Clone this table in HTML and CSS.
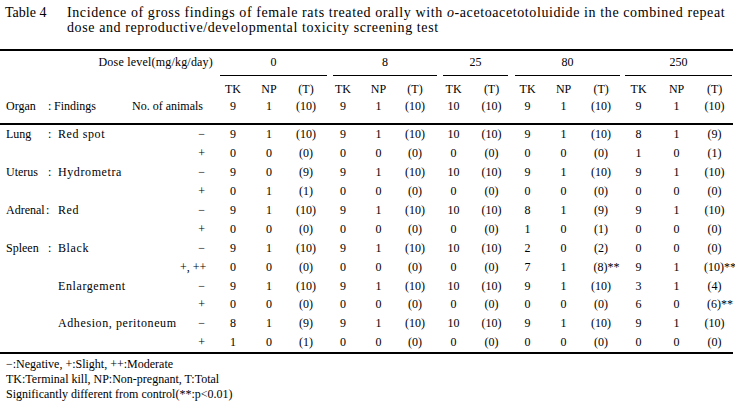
FILE: index.html
```html
<!DOCTYPE html>
<html>
<head>
<meta charset="utf-8">
<link rel="stylesheet" href="styles.css">
</head>
<body>
<div class="page">
  <div class="caption">
    <div class="label">Table 4</div>
    <div class="title"><span class="tl">Incidence of gross findings of female rats treated orally with <i>o</i>-acetoacetotoluidide in the combined repeat</span><span class="tl">dose and reproductive/developmental toxicity screening test</span></div>
  </div>
  <table class="data">
    <colgroup>
      <col class="c-organ"><col class="c-colon"><col class="c-find"><col class="c-sign">
      <col class="w36"><col class="w36"><col class="w38">
      <col class="w36"><col class="w35"><col class="w38">
      <col class="w39"><col class="w37">
      <col class="w35"><col class="w37"><col class="w38">
      <col class="w37"><col class="w39"><col class="w37">
    </colgroup>
    <thead>
      <tr class="h-dose">
        <th colspan="4" class="dl">Dose level(mg/kg/day)</th>
        <th colspan="3" class="grp g0"><span>0</span></th>
        <th colspan="3" class="grp g8"><span>8</span></th>
        <th colspan="2" class="grp g25"><span>25</span></th>
        <th colspan="3" class="grp g80"><span>80</span></th>
        <th colspan="3" class="grp g250"><span>250</span></th>
      </tr>
      <tr class="h-sub">
        <th colspan="4"></th>
        <th>TK</th><th>NP</th><th>(T)</th>
        <th>TK</th><th>NP</th><th>(T)</th>
        <th>TK</th><th>(T)</th>
        <th>TK</th><th>NP</th><th>(T)</th>
        <th>TK</th><th>NP</th><th>(T)</th>
      </tr>
      <tr class="h-n">
        <th class="organ">Organ</th><th class="colon">:</th>
        <th colspan="2" class="find-n"><div class="fn"><span>Findings</span><span>No. of animals</span></div></th>
        <th>9</th><th>1</th><th>(10)</th>
        <th>9</th><th>1</th><th>(10)</th>
        <th>10</th><th>(10)</th>
        <th>9</th><th>1</th><th>(10)</th>
        <th>9</th><th>1</th><th>(10)</th>
      </tr>
    </thead>
    <tbody>
      <tr><td class="organ">Lung</td><td class="colon">:</td><td class="find">Red spot</td><td class="sign">&minus;</td>
        <td>9</td><td>1</td><td>(10)</td><td>9</td><td>1</td><td>(10)</td><td>10</td><td>(10)</td><td>9</td><td>1</td><td>(10)</td><td>8</td><td>1</td><td>(9)</td></tr>
      <tr><td class="organ"></td><td class="colon"></td><td class="find"></td><td class="sign">+</td>
        <td>0</td><td>0</td><td>(0)</td><td>0</td><td>0</td><td>(0)</td><td>0</td><td>(0)</td><td>0</td><td>0</td><td>(0)</td><td>1</td><td>0</td><td>(1)</td></tr>
      <tr><td class="organ">Uterus</td><td class="colon">:</td><td class="find">Hydrometra</td><td class="sign">&minus;</td>
        <td>9</td><td>0</td><td>(9)</td><td>9</td><td>1</td><td>(10)</td><td>10</td><td>(10)</td><td>9</td><td>1</td><td>(10)</td><td>9</td><td>1</td><td>(10)</td></tr>
      <tr><td class="organ"></td><td class="colon"></td><td class="find"></td><td class="sign">+</td>
        <td>0</td><td>1</td><td>(1)</td><td>0</td><td>0</td><td>(0)</td><td>0</td><td>(0)</td><td>0</td><td>0</td><td>(0)</td><td>0</td><td>0</td><td>(0)</td></tr>
      <tr><td class="organ">Adrenal</td><td class="colon tight">:</td><td class="find">Red</td><td class="sign">&minus;</td>
        <td>9</td><td>1</td><td>(10)</td><td>9</td><td>1</td><td>(10)</td><td>10</td><td>(10)</td><td>8</td><td>1</td><td>(9)</td><td>9</td><td>1</td><td>(10)</td></tr>
      <tr><td class="organ"></td><td class="colon"></td><td class="find"></td><td class="sign">+</td>
        <td>0</td><td>0</td><td>(0)</td><td>0</td><td>0</td><td>(0)</td><td>0</td><td>(0)</td><td>1</td><td>0</td><td>(1)</td><td>0</td><td>0</td><td>(0)</td></tr>
      <tr><td class="organ">Spleen</td><td class="colon">:</td><td class="find">Black</td><td class="sign">&minus;</td>
        <td>9</td><td>1</td><td>(10)</td><td>9</td><td>1</td><td>(10)</td><td>10</td><td>(10)</td><td>2</td><td>0</td><td>(2)</td><td>0</td><td>0</td><td>(0)</td></tr>
      <tr><td class="organ"></td><td class="colon"></td><td class="find"></td><td class="sign multi">+, ++</td>
        <td>0</td><td>0</td><td>(0)</td><td>0</td><td>0</td><td>(0)</td><td>0</td><td>(0)</td><td>7</td><td>1</td><td>(8)<span class="sig">**</span></td><td>9</td><td>1</td><td>(10)<span class="sig">**</span></td></tr>
      <tr><td class="organ"></td><td class="colon"></td><td class="find">Enlargement</td><td class="sign">&minus;</td>
        <td>9</td><td>1</td><td>(10)</td><td>9</td><td>1</td><td>(10)</td><td>10</td><td>(10)</td><td>9</td><td>1</td><td>(10)</td><td>3</td><td>1</td><td>(4)</td></tr>
      <tr><td class="organ"></td><td class="colon"></td><td class="find"></td><td class="sign">+</td>
        <td>0</td><td>0</td><td>(0)</td><td>0</td><td>0</td><td>(0)</td><td>0</td><td>(0)</td><td>0</td><td>0</td><td>(0)</td><td>6</td><td>0</td><td>(6)<span class="sig">**</span></td></tr>
      <tr><td class="organ"></td><td class="colon"></td><td class="find">Adhesion, peritoneum</td><td class="sign">&minus;</td>
        <td>8</td><td>1</td><td>(9)</td><td>9</td><td>1</td><td>(10)</td><td>10</td><td>(10)</td><td>9</td><td>1</td><td>(10)</td><td>9</td><td>1</td><td>(10)</td></tr>
      <tr><td class="organ"></td><td class="colon"></td><td class="find"></td><td class="sign">+</td>
        <td>1</td><td>0</td><td>(1)</td><td>0</td><td>0</td><td>(0)</td><td>0</td><td>(0)</td><td>0</td><td>0</td><td>(0)</td><td>0</td><td>0</td><td>(0)</td></tr>
    </tbody>
  </table>
  <div class="notes">
    <div>&minus;:Negative, +:Slight, ++:Moderate</div>
    <div>TK:Terminal kill, NP:Non-pregnant, T:Total</div>
    <div>Significantly different from control(**:p&lt;0.01)</div>
  </div>
</div>
</body>
</html>
```
FILE: styles.css
```css
body {
  margin: 0;
  background: #fff;
  color: #000;
  font-family: "Liberation Serif", "DejaVu Serif", serif;
}
.page {
  width: 735px;
}
.caption {
  display: flex;
  padding: 5px 0 0 5px;
  font-size: 14px;
  line-height: 15px;
}
.caption .label {
  width: 62px;
  flex: none;
}
.caption .title {
  width: 668px;
  letter-spacing: 0.6px;
}
.title .tl {
  display: block;
  white-space: nowrap;
}
table.data {
  margin-top: 14px;
  width: 733px;
  border-collapse: collapse;
  table-layout: fixed;
  font-size: 12px;
  line-height: 14px;
  border-top: 2px solid #000;
  border-bottom: 2px solid #000;
}
.c-organ { width: 48px; }
.c-colon { width: 8px; }
.c-find { width: 124px; }
.c-sign { width: 35px; }
.w35 { width: 35px; }
.w36 { width: 36px; }
.w37 { width: 37px; }
.w38 { width: 38px; }
.w39 { width: 39px; }
th, td {
  padding: 0;
  font-weight: normal;
  text-align: center;
  white-space: nowrap;
}
.h-dose th {
  height: 25px;
  vertical-align: bottom;
}
.h-dose th.dl {
  text-align: right;
  height: 18px;
  padding: 0 2px 7px 0;
  letter-spacing: 0.2px;
}
.h-dose th.grp span {
  display: block;
  padding-bottom: 6px;
  border-bottom: 1px solid #000;
}
.g0 span { margin: 0 -2px 0 5px; }
.g8 span { margin: 0 -3px 0 8px; }
.g25 span { margin: 0 2px 0 9px; }
.g80 span { margin: 0 0 0 5px; }
.g250 span { margin: 0 1px 0 5px; }
.h-sub th {
  height: 20px;
  padding-bottom: 1px;
  vertical-align: bottom;
}
.h-n th {
  height: 24px;
  vertical-align: top;
  padding-top: 2px;
  border-bottom: 2px solid #000;
}
.fn {
  display: flex;
  justify-content: space-between;
  margin-left: -2px;
  padding-right: 12px;
}
tbody td {
  height: 18.9px;
  vertical-align: middle;
}
th.organ, td.organ {
  text-align: left;
  padding-left: 6px;
}
th.colon, td.colon {
  text-align: left;
}
td.colon.tight {
  text-indent: -2px;
}
td.find {
  text-align: left;
  padding-left: 2px;
  letter-spacing: 0.6px;
}
td.sign {
  text-align: right;
  padding-right: 10px;
}
td.sign.multi {
  padding-right: 20px;
}
.sig {
  margin-right: -11px;
}
.notes {
  padding: 3px 0 0 6px;
  font-size: 12px;
  line-height: 15px;
}
```
